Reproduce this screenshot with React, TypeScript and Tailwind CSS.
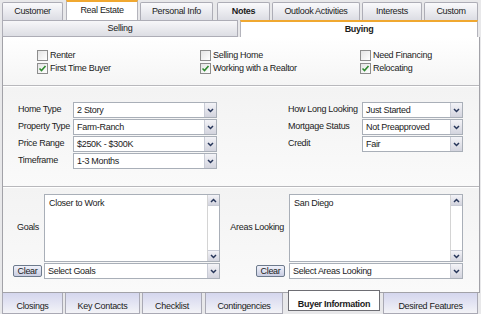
import React from 'react';

function Chevron({ up = false }: { up?: boolean }) {
  return (
    <svg width="7" height="5" viewBox="0 0 7 5">
      <path d={up ? 'M1 4 L3.5 1.5 L6 4' : 'M1 1 L3.5 3.5 L6 1'} stroke="#27365a" strokeWidth="1.5" fill="none" />
    </svg>
  );
}

function DropBtn() {
  return (
    <div className="w-[12px] border-l border-[#c9ccd6] bg-gradient-to-b from-[#f3f3f7] to-[#d3d4de] flex items-center justify-center">
      <Chevron />
    </div>
  );
}

function Select({ value, className }: { value: string; className: string }) {
  return (
    <div className={`${className} h-[16px] flex border border-[#a9afb8] bg-white`}>
      <div className="flex-1 pl-[3px] leading-[14px] whitespace-nowrap overflow-hidden">{value}</div>
      <DropBtn />
    </div>
  );
}

function Check({ checked, label }: { checked?: boolean; label: string }) {
  return (
    <div className="flex items-center h-[12px] gap-[2px]">
      <div className="w-[11px] h-[11px] border border-[#8d8d8d] bg-gradient-to-br from-[#e4e4e4] to-white flex items-center justify-center">
        {checked && (
          <svg width="9" height="9" viewBox="0 0 9 9">
            <path d="M1.5 4.5 L3.5 6.5 L7.5 2" stroke="#2f8a2f" strokeWidth="1.6" fill="none" />
          </svg>
        )}
      </div>
      <span className="leading-[12px]">{label}</span>
    </div>
  );
}

function ListBox({ text }: { text: string }) {
  return (
    <div className="h-[68px] flex border border-[#a9afb8] bg-white">
      <div className="flex-1 pl-[4px] pt-[2px]">{text}</div>
      <div className="w-[12px] border-l border-[#d4d4d4] flex flex-col justify-between">
        <div className="h-[11px] bg-gradient-to-b from-[#f3f3f7] to-[#d3d4de] border-b border-[#c9ccd6] flex items-center justify-center">
          <Chevron up />
        </div>
        <div className="h-[11px] bg-gradient-to-b from-[#f3f3f7] to-[#d3d4de] border-t border-[#c9ccd6] flex items-center justify-center">
          <Chevron />
        </div>
      </div>
    </div>
  );
}

function ClearBtn() {
  return (
    <div className="w-[29px] h-[12px] border border-[#6d7a8c] rounded-[2px] bg-gradient-to-b from-[#f0f2fb] to-[#c9cde2] text-center leading-[10px]">
      Clear
    </div>
  );
}

const topTabs = [
  { label: 'Customer', cls: 'ml-[2px] w-[61px]' },
  { label: 'Real Estate', cls: 'ml-[3px] w-[72px]', sel: true },
  { label: 'Personal Info', cls: 'ml-[2px] w-[73px]' },
  { label: 'Notes', cls: 'ml-[4px] w-[53px]', bold: true },
  { label: 'Outlook Activities', cls: 'ml-[2px] w-[88px]' },
  { label: 'Interests', cls: 'ml-[2px] w-[60px]' },
  { label: 'Custom', cls: 'ml-[2px] w-[54px]' },
];

const bottomTabs = [
  { label: 'Closings', cls: 'ml-[2px] w-[61px]' },
  { label: 'Key Contacts', cls: 'ml-[2px] w-[75px]' },
  { label: 'Checklist', cls: 'ml-[2px] w-[60px]' },
  { label: 'Contingencies', cls: 'ml-[3px] w-[78px]' },
  { label: 'Buyer Information', cls: 'ml-[5px] w-[92px]', sel: true },
  { label: 'Desired Features', cls: 'ml-[3px] w-[95px]' },
];

export default function App() {
  return (
    <div className="w-[481px] h-[314px] overflow-hidden bg-[#e8e8ea] text-[9px] tracking-[-0.3px] text-[#1b1b1b] font-['Liberation_Sans',Arial,sans-serif]">
      {/* top tabs */}
      <div className="h-[20px] flex items-end">
        {topTabs.map((t) =>
          t.sel ? (
            <div key={t.label} className={`${t.cls} h-[20px] bg-white border-t-2 border-[#f0a830] border-x border-x-[#b4b4bc] text-center leading-[16px]`}>
              {t.label}
            </div>
          ) : (
            <div key={t.label} className={`${t.cls} h-[18px] bg-gradient-to-b from-[#fafafc] to-[#dcdde4] border border-b-0 border-[#adadb6] rounded-t-[2px] text-center leading-[16px] ${t.bold ? 'font-bold' : ''}`}>
              {t.label}
            </div>
          )
        )}
      </div>

      {/* sub tabs */}
      <div className="h-[17px] flex">
        <div className="ml-[2px] w-[236px] bg-gradient-to-b from-[#f7f7f9] to-[#dddee4] border border-[#adadb6] text-center leading-[15px]">Selling</div>
        <div className="ml-[2px] w-[238px] bg-white border-t-2 border-[#f0a830] border-x border-x-[#b4b4bc] text-center leading-[14px] font-bold">Buying</div>
      </div>

      {/* panel */}
      <div className="ml-[2px] w-[478px] h-[256px] border border-t-0 border-[#a2a2a8] flex flex-col bg-[#f8f8f8]">
        <div className="h-[49px] border-b border-[#b8b8bc] bg-gradient-to-b from-white to-[#f5f5f5] pl-[34px] pt-[12px] grid grid-cols-[163px_160px_1fr] gap-y-[1px] content-start">
          <Check label="Renter" />
          <Check label="Selling Home" />
          <Check label="Need Financing" />
          <Check checked label="First Time Buyer" />
          <Check checked label="Working with a Realtor" />
          <Check checked label="Relocating" />
        </div>

        <div className="h-[101px] border-b border-[#b8b8bc] border-t border-t-white bg-gradient-to-b from-[#f3f3f3] to-[#fafafa] flex pl-[15px] pt-[15px]">
          <div className="grid grid-cols-[55px_144px] auto-rows-[16px] gap-y-[1px] items-center content-start">
            <span>Home Type</span>
            <Select value="2 Story" className="w-[144px]" />
            <span>Property Type</span>
            <Select value="Farm-Ranch" className="w-[144px]" />
            <span>Price Range</span>
            <Select value="$250K - $300K" className="w-[144px]" />
            <span>Timeframe</span>
            <Select value="1-3 Months" className="w-[144px]" />
          </div>
          <div className="ml-[71px] grid grid-cols-[74px_101px] auto-rows-[16px] gap-y-[1px] items-center content-start">
            <span>How Long Looking</span>
            <Select value="Just Started" className="w-[101px]" />
            <span>Mortgage Status</span>
            <Select value="Not Preapproved" className="w-[101px]" />
            <span>Credit</span>
            <Select value="Fair" className="w-[101px]" />
          </div>
        </div>

        <div className="flex-1 border-t border-t-white bg-gradient-to-b from-[#f3f3f3] to-[#fafafa] flex pt-[6px]">
          <div className="grid grid-cols-[41px_176px] grid-rows-[68px_16px] gap-y-[1px]">
            <div className="flex items-center justify-end pr-[5px]">Goals</div>
            <ListBox text="Closer to Work" />
            <div className="flex items-center justify-end pr-[2px]">
              <ClearBtn />
            </div>
            <Select value="Select Goals" className="w-[176px]" />
          </div>
          <div className="ml-[9px] grid grid-cols-[60px_174px] grid-rows-[68px_16px] gap-y-[1px]">
            <div className="flex items-center justify-end pr-[5px] whitespace-nowrap">Areas Looking</div>
            <ListBox text="San Diego" />
            <div className="flex items-center justify-end pr-[4px]">
              <ClearBtn />
            </div>
            <Select value="Select Areas Looking" className="w-[174px]" />
          </div>
        </div>
      </div>

      {/* bottom tabs */}
      <div className="h-[21px] flex items-start">
        {bottomTabs.map((t) =>
          t.sel ? (
            <div key={t.label} className={`${t.cls} -mt-[3px] h-[21px] bg-white border border-[#6e6e74] text-center leading-[27px] font-bold relative overflow-hidden`}>
              {t.label}
            </div>
          ) : (
            <div key={t.label} className={`${t.cls} h-[21px] bg-gradient-to-b from-[#d4d6ee] to-[#f3f3f7] border border-t-0 border-[#a9a9b4] text-center leading-[27px] overflow-hidden`}>
              {t.label}
            </div>
          )
        )}
      </div>
    </div>
  );
}
